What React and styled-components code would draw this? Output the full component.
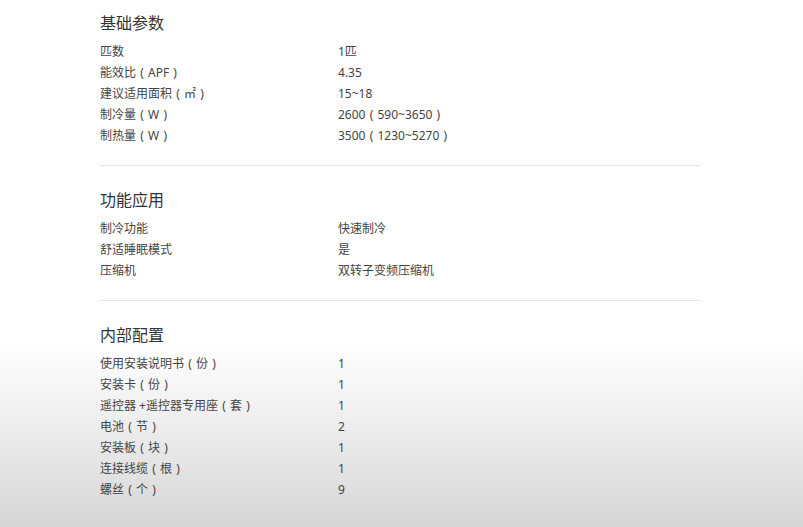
import React from "react";
import styled, { createGlobalStyle } from "styled-components";

const GlobalStyle = createGlobalStyle`
  html {
    background: linear-gradient(to bottom, #ffffff 0, #ffffff 345px, #d6d6d6 527px);
    min-height: 100%;
  }
  body {
    margin: 0;
    font-family: "Noto Sans", "Noto Sans CJK SC", sans-serif;
    color: #333;
  }
`;

const Page = styled.div`
  width: 600px;
  margin-left: 100px;
  min-height: 527px;
`;

const Section = styled.section`
  padding: ${(props) => (props.$first ? "11px" : "22px")} 0 19px;
  border-bottom: ${(props) => (props.$last ? "none" : "1px solid #e6e6e6")};
`;

const Title = styled.h3`
  margin: 0 0 6px;
  font-size: 16px;
  line-height: 24px;
  font-weight: 400;
  color: #333;
`;

const Row = styled.div`
  display: grid;
  grid-template-columns: 238px 1fr;
  font-size: 12px;
  line-height: 21px;
  color: #444;
`;

// full-width bracket, glyph centred in its em box
const Paren = styled.span`
  display: inline-block;
  width: 1em;
  text-align: center;
`;

// swap （ ） for centred brackets, as the reference font draws them
function withParens(text) {
  return text.split(/([（）])/).map((part, i) => {
    if (part === "（") return <Paren key={i}>(</Paren>;
    if (part === "）") return <Paren key={i}>)</Paren>;
    return part;
  });
}

const sections = [
  {
    title: "基础参数",
    rows: [
      ["匹数", "1匹"],
      ["能效比（APF）", "4.35"],
      ["建议适用面积（㎡）", "15~18"],
      ["制冷量（W）", "2600（590~3650）"],
      ["制热量（W）", "3500（1230~5270）"],
    ],
  },
  {
    title: "功能应用",
    rows: [
      ["制冷功能", "快速制冷"],
      ["舒适睡眠模式", "是"],
      ["压缩机", "双转子变频压缩机"],
    ],
  },
  {
    title: "内部配置",
    rows: [
      ["使用安装说明书（份）", "1"],
      ["安装卡（份）", "1"],
      ["遥控器 +遥控器专用座（套）", "1"],
      ["电池（节）", "2"],
      ["安装板（块）", "1"],
      ["连接线缆（根）", "1"],
      ["螺丝（个）", "9"],
    ],
  },
];

export default function App() {
  return (
    <>
      <GlobalStyle />
      <Page>
        {sections.map((s, i) => (
          <Section key={s.title} $first={i === 0} $last={i === sections.length - 1}>
            <Title>{s.title}</Title>
            {s.rows.map(([label, value]) => (
              <Row key={label}>
                <span>{withParens(label)}</span>
                <span>{withParens(value)}</span>
              </Row>
            ))}
          </Section>
        ))}
      </Page>
    </>
  );
}
